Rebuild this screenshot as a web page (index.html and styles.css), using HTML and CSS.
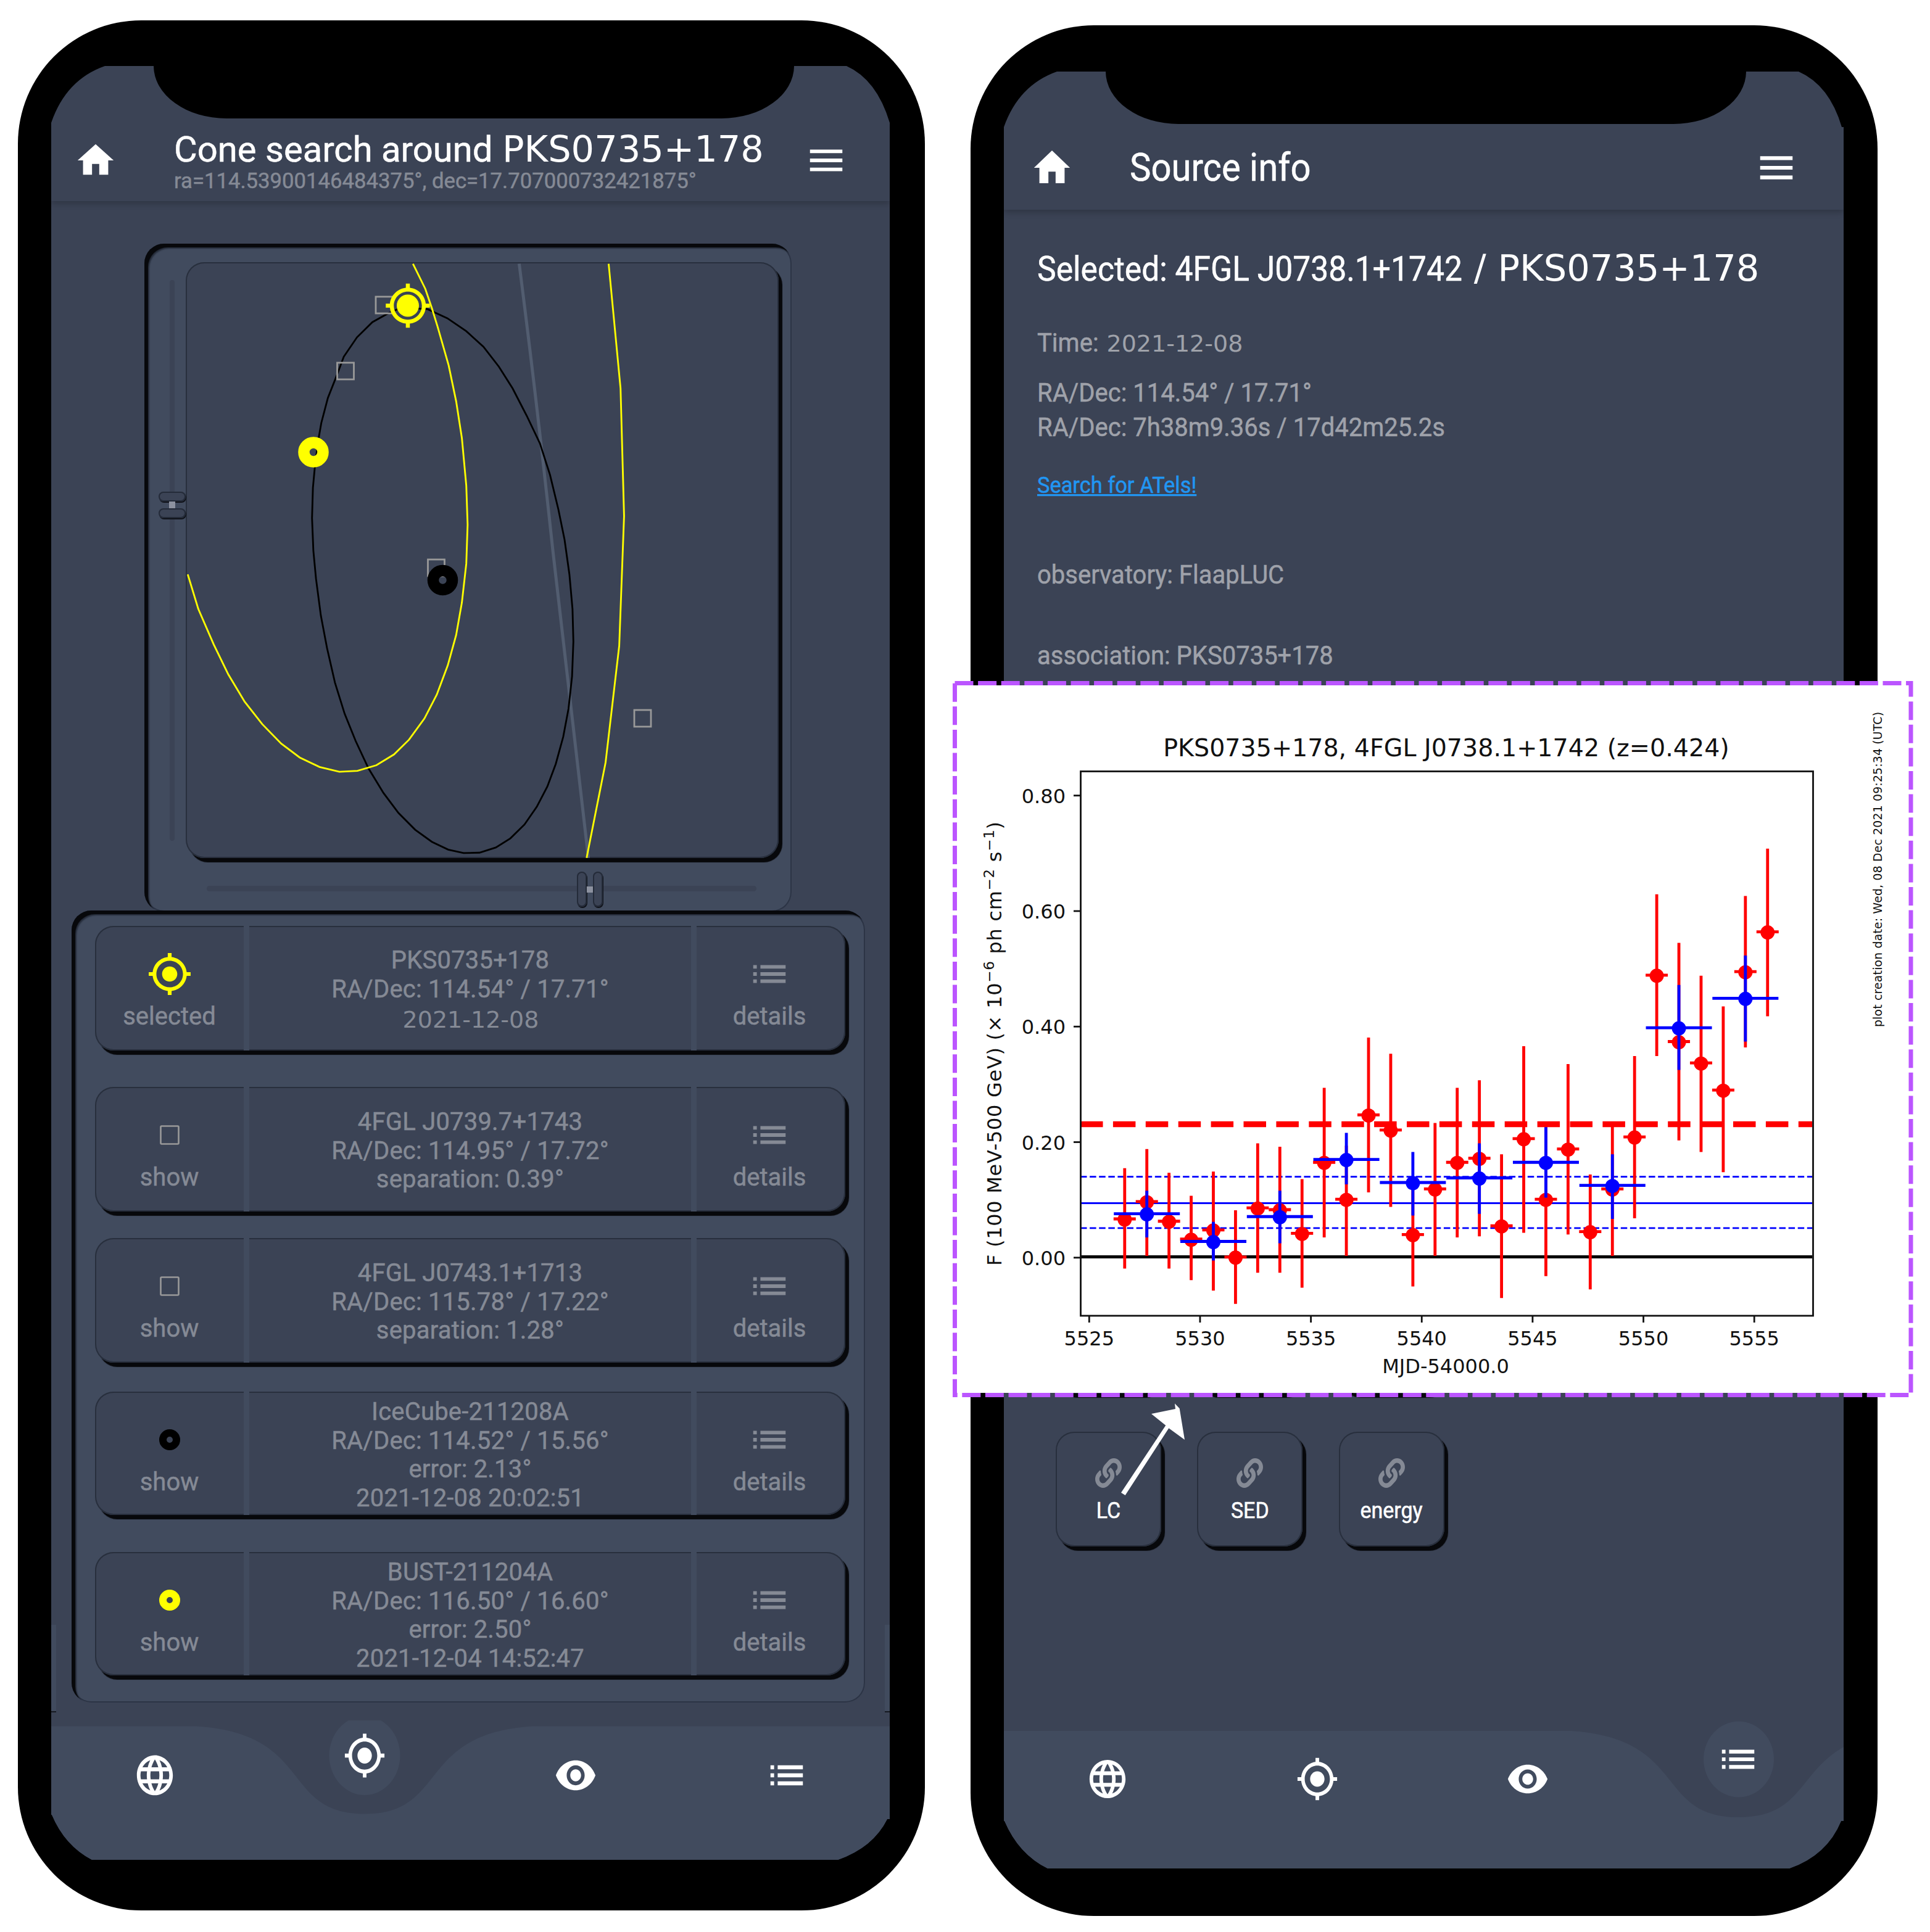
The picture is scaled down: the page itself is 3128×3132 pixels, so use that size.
FILE: index.html
```html
<!DOCTYPE html>
<html lang="en">
<head>
<meta charset="UTF-8">
<title>Cone search</title>
<link rel="stylesheet" href="styles.css">
</head>
<body>

<!-- icon set -->
<svg class="defs" width="0" height="0">
	<symbol id="i-home" viewBox="0 0 24 24"><path d="M10 20v-6h4v6h5v-8h3L12 3 2 12h3v8z"/></symbol>
	<symbol id="i-menu" viewBox="0 0 24 24"><path d="M3 18h18v-2H3v2zm0-5h18v-2H3v2zm0-7v2h18V6H3z"/></symbol>
	<symbol id="i-list" viewBox="0 0 24 24"><path d="M3 13h2v-2H3v2zm0 4h2v-2H3v2zm0-8h2V7H3v2zm4 4h14v-2H7v2zm0 4h14v-2H7v2zM7 7v2h14V7H7z"/></symbol>
	<symbol id="i-target" viewBox="0 0 24 24"><path d="M12 8c-2.21 0-4 1.79-4 4s1.79 4 4 4 4-1.79 4-4-1.79-4-4-4zm8.94 3c-.46-4.17-3.77-7.48-7.94-7.94V1h-2v2.06C6.83 3.52 3.52 6.83 3.06 11H1v2h2.06c.46 4.17 3.77 7.48 7.94 7.94V23h2v-2.06c4.17-.46 7.48-3.77 7.94-7.94H23v-2h-2.06zM12 19c-3.87 0-7-3.13-7-7s3.13-7 7-7 7 3.13 7 7-3.13 7-7 7z"/></symbol>
	<symbol id="i-globe" viewBox="0 0 24 24"><path d="M11.99 2C6.47 2 2 6.48 2 12s4.47 10 9.99 10C17.52 22 22 17.52 22 12S17.52 2 11.99 2zm6.93 6h-2.95c-.32-1.25-.78-2.45-1.38-3.56 1.84.63 3.37 1.91 4.33 3.56zM12 4.04c.83 1.2 1.48 2.53 1.91 3.96h-3.82c.43-1.43 1.08-2.76 1.91-3.96zM4.26 14C4.1 13.36 4 12.69 4 12s.1-1.36.26-2h3.38c-.08.66-.14 1.32-.14 2 0 .68.06 1.34.14 2H4.26zm.82 2h2.95c.32 1.25.78 2.45 1.38 3.56-1.84-.63-3.37-1.9-4.33-3.56zm2.95-8H5.08c.96-1.66 2.49-2.93 4.33-3.56C8.81 5.55 8.35 6.75 8.03 8zM12 19.96c-.83-1.2-1.48-2.53-1.91-3.96h3.82c-.43 1.43-1.08 2.76-1.91 3.96zM14.34 14H9.66c-.09-.66-.16-1.32-.16-2 0-.68.07-1.35.16-2h4.68c.09.65.16 1.32.16 2 0 .68-.07 1.34-.16 2zm.25 5.56c.6-1.11 1.06-2.31 1.38-3.56h2.95c-.96 1.65-2.49 2.93-4.33 3.56zM16.36 14c.08-.66.14-1.32.14-2 0-.68-.06-1.34-.14-2h3.38c.16.64.26 1.31.26 2s-.1 1.36-.26 2h-3.38z"/></symbol>
	<symbol id="i-eye" viewBox="0 0 24 24"><path d="M12 4.5C7 4.5 2.73 7.61 1 12c1.73 4.39 6 7.5 11 7.5s9.27-3.11 11-7.5c-1.73-4.39-6-7.5-11-7.5zM12 17c-2.76 0-5-2.24-5-5s2.24-5 5-5 5 2.24 5 5-2.24 5-5 5zm0-8c-1.66 0-3 1.34-3 3s1.34 3 3 3 3-1.34 3-3-1.34-3-3-3z"/></symbol>
	<symbol id="i-link" viewBox="0 0 512 512" preserveAspectRatio="none"><path d="M326.612 185.391c59.747 59.809 58.927 155.698.36 214.59-.11.12-.24.25-.36.37l-67.2 67.2c-59.27 59.27-155.699 59.262-214.96 0-59.27-59.26-59.27-155.7 0-214.96l37.106-37.106c9.84-9.84 26.786-3.3 27.294 10.606.648 17.722 3.826 35.527 9.69 52.721 1.986 5.822.567 12.262-3.783 16.612l-13.087 13.087c-28.026 28.026-28.905 73.66-1.155 101.96 28.024 28.579 74.086 28.749 102.325.51l67.2-67.19c28.191-28.191 28.073-73.757 0-101.83-3.701-3.694-7.429-6.564-10.341-8.569a16.037 16.037 0 0 1-6.947-12.606c-.396-10.567 3.348-21.456 11.698-29.806l21.054-21.055c5.521-5.521 14.182-6.199 20.584-1.731a152.482 152.482 0 0 1 20.522 17.197zM467.547 44.449c-59.261-59.262-155.69-59.27-214.96 0l-67.2 67.2c-.12.12-.25.25-.36.37-58.566 58.892-59.387 154.781.36 214.59a152.454 152.454 0 0 0 20.521 17.196c6.402 4.468 15.064 3.789 20.584-1.731l21.054-21.055c8.35-8.35 12.094-19.239 11.698-29.806a16.037 16.037 0 0 0-6.947-12.606c-2.912-2.005-6.64-4.875-10.341-8.569-28.073-28.073-28.191-73.639 0-101.83l67.2-67.19c28.239-28.239 74.3-28.069 102.325.51 27.75 28.3 26.872 73.934-1.155 101.96l-13.087 13.087c-4.35 4.35-5.769 10.79-3.783 16.612 5.864 17.194 9.042 34.999 9.69 52.721.509 13.906 17.454 20.446 27.294 10.606l37.106-37.106c59.271-59.259 59.271-155.699.001-214.959z"/></symbol>
	<symbol id="i-square" viewBox="0 0 70 70"><rect x="20.5" y="20.5" width="29" height="29" rx="1.5" fill="none" stroke="#999" stroke-width="2.6"/></symbol>
	<symbol id="i-ring" viewBox="0 0 70 70"><circle cx="35" cy="35" r="11" fill="none" stroke="currentColor" stroke-width="12"/></symbol>
</svg>

<div class="phones">

	<div class="phone phone-1">
		<div class="screen">
			<div class="notch"></div>
			<header class="bar">
				<svg class="icon"><use href="#i-home"/></svg>
				<div class="titles">
					<h1>Cone search around <span class="name">PKS0735+178</span></h1>
					<p class="sub">ra=114.53900146484375°, dec=17.707000732421875°</p>
				</div>
				<svg class="icon menu"><use href="#i-menu"/></svg>
			</header>

			<section class="sunken map-panel">
				<div class="slider slider-v">
					<div class="track"></div>
					<div class="knob"><i></i><b></b><i></i></div>
				</div>
				<div class="raised map">
					<svg viewBox="0 0 961 966">
						<g transform="translate(-101 -55) scale(.7143 .7015)" fill="none" stroke-width="4">
							<path stroke="#525d70" stroke-width="7" d="M898 82Q938 400 975 750Q1015 1100 1055 1455"/>
							<path stroke="#000" d="M645 184L690 187 735 208 778 238 817 274 852 320 883 370 915 433 945 497 968 570 987 650 1001 720 1012 800 1019 880 1021 955 1018 1035 1010 1110 998 1175 981 1238 962 1290 938 1337 910 1378 878 1410 845 1431 808 1443 772 1444 737 1436 700 1418 662 1390 624 1351 590 1305 556 1248 527 1185 502 1122 480 1050 462 970 448 895 437 810 431 745 428 670 430 600 435 545 443 485 449 450 464 392 485 338 500 297 530 252 565 217 600 197 620 188Z"/>
							<path stroke="#ff0" d="M657 82L685 140 700 185 713 228 738 317 755 400 768 485 778 595 781 685 778 775 768 865 755 940 736 1010 711 1078 683 1133 648 1182 614 1216 574 1241 531 1254 490 1256 445 1245 400 1223 358 1191 315 1146 275 1094 238 1031 205 962 170 880 146 800"/>
							<path stroke="#ff0" d="M1101 82L1128 370 1136 665 1125 965 1094 1235 1051 1455"/>
						</g>
						<g fill="none" stroke="#999" stroke-width="2.8">
							<rect x="308" y="56" width="27" height="27"/>
							<rect x="245.500" y="163" width="27" height="27"/>
							<rect x="392.500" y="482" width="27" height="27"/>
							<rect x="727" y="726" width="27" height="27"/>
						</g>
						<circle cx="207" cy="308" r="15.500" fill="none" stroke="#ff0" stroke-width="18.500"/>
						<circle cx="416.500" cy="515.500" r="15.500" fill="none" stroke="#000" stroke-width="18.500"/>
						<svg x="321" y="31.500" width="78" height="78" fill="#ff0"><use href="#i-target"/></svg>
						<circle cx="360" cy="70.500" r="18" fill="#ff0"/>
					</svg>
				</div>
				<div class="slider slider-h">
					<div class="track"></div>
					<div class="knob"><i></i><b></b><i></i></div>
				</div>
			</section>

			<section class="sunken list">
				<article class="raised item">
					<div class="side selected"><svg class="icon"><use href="#i-target"/></svg>selected</div>
					<div class="text">PKS0735+178<br>RA/Dec: 114.54° / 17.71°<br><span class="stamp">2021-12-08</span></div>
					<div class="side"><svg class="icon"><use href="#i-list"/></svg>details</div>
				</article>
				<article class="raised item item-2">
					<div class="side"><svg class="icon"><use href="#i-square"/></svg>show</div>
					<div class="text">4FGL J0739.7+1743<br>RA/Dec: 114.95° / 17.72°<br>separation: 0.39°</div>
					<div class="side"><svg class="icon"><use href="#i-list"/></svg>details</div>
				</article>
				<article class="raised item item-3">
					<div class="side"><svg class="icon"><use href="#i-square"/></svg>show</div>
					<div class="text">4FGL J0743.1+1713<br>RA/Dec: 115.78° / 17.22°<br>separation: 1.28°</div>
					<div class="side"><svg class="icon"><use href="#i-list"/></svg>details</div>
				</article>
				<article class="raised item item-4">
					<div class="side black"><svg class="icon"><use href="#i-ring"/></svg>show</div>
					<div class="text">IceCube-211208A<br>RA/Dec: 114.52° / 15.56°<br>error: 2.13°<br>2021-12-08 20:02:51</div>
					<div class="side"><svg class="icon"><use href="#i-list"/></svg>details</div>
				</article>
				<article class="raised item item-5">
					<div class="side yellow"><svg class="icon"><use href="#i-ring"/></svg>show</div>
					<div class="text">BUST-211204A<br>RA/Dec: 116.50° / 16.60°<br>error: 2.50°<br>2021-12-04 14:52:47</div>
					<div class="side"><svg class="icon"><use href="#i-list"/></svg>details</div>
				</article>
			</section>

			<nav class="tabs">
				<svg class="wave" viewBox="0 -9.5 1359 226.5">
					<path d="M0 0H236C426 12 372 142 508 142C644 142 590 12 780 0H1359V217H0Z"/>
					<ellipse cx="508" cy="47.500" rx="57.500" ry="64"/>
				</svg>
				<a><svg class="icon"><use href="#i-globe"/></svg></a>
				<a class="active"><svg class="icon"><use href="#i-target"/></svg></a>
				<a><svg class="icon"><use href="#i-eye"/></svg></a>
				<a><svg class="icon"><use href="#i-list"/></svg></a>
			</nav>
		</div>
	</div>

	<div class="phone phone-2">
		<div class="screen">
			<div class="notch"></div>
			<header class="bar">
				<svg class="icon tall"><use href="#i-home"/></svg>
				<h1 class="tall">Source info</h1>
				<svg class="icon tall menu"><use href="#i-menu"/></svg>
			</header>
			<main class="info">
				<h2><span class="tall">Selected: 4FGL J0738.1+1742</span><span class="name"> / PKS0735+178</span></h2>
				<p class="time"><span class="tall">Time:</span> <span class="stamp">2021-12-08</span></p>
				<p class="deg"><span class="tall">RA/Dec: 114.54° / 17.71°</span></p>
				<p class="hms"><span class="tall">RA/Dec: 7h38m9.36s / 17d42m25.2s</span></p>
				<p class="atel"><a class="tall">Search for ATels!</a></p>
				<p class="obs"><span class="tall">observatory: FlaapLUC</span></p>
				<p class="assoc"><span class="tall">association: PKS0735+178</span></p>
				<div class="links covered">
					<div class="raised link"></div>
					<div class="raised link"></div>
					<div class="raised link"></div>
				</div>
				<div class="links">
					<div class="raised link"><svg><use href="#i-link"/></svg><span class="tall">LC</span></div>
					<div class="raised link"><svg><use href="#i-link"/></svg><span class="tall">SED</span></div>
					<div class="raised link"><svg><use href="#i-link"/></svg><span class="tall">energy</span></div>
				</div>
			</main>
			<nav class="tabs">
				<svg class="wave" viewBox="0 -16 1361 239">
					<path d="M0 0H919C1109 12 1055 140 1191 140C1327 140 1273 12 1463 0V223H0Z"/>
					<ellipse cx="1191" cy="46" rx="57" ry="61.500"/>
				</svg>
				<a><svg class="icon"><use href="#i-globe"/></svg></a>
				<a><svg class="icon"><use href="#i-target"/></svg></a>
				<a><svg class="icon"><use href="#i-eye"/></svg></a>
				<a class="active"><svg class="icon"><use href="#i-list"/></svg></a>
			</nav>
		</div>
	</div>
</div>

<!-- light curve opened from the LC button -->
<svg class="plot" viewBox="1544 1104 1557 1162">
	<rect x="1551" y="1111" width="1543" height="1147" fill="#fff"/>
	<rect x="1547.500" y="1107.500" width="1549.500" height="1154" fill="none" stroke="#bb55ff" stroke-width="7" stroke-dasharray="30 7.6"/>
	<text class="plot-title" x="2344" y="1226">PKS0735+178, 4FGL J0738.1+1742 (z=0.424)</text>
	<g stroke="#00f" stroke-width="2.800">
		<path d="M1751 1950.500H2937"/>
		<path d="M1751 1907.700H2937M1751 1990.800H2937" stroke-dasharray="10.500 4.600"/>
	</g>
	<path d="M1751 1822.500H2937" stroke="#f00" stroke-width="9.500" stroke-dasharray="36.500 16.400"/>
	<path d="M1751 2037.500H2937" stroke="#000" stroke-width="5"/>
	<g id="points"></g>
	<rect x="1751.500" y="1250.500" width="1187" height="882.500" fill="none" stroke="#111" stroke-width="2.800"/>
	<g id="ticks" stroke="#111" stroke-width="2.800"></g>
	<g id="labels"></g>
	<text class="mid" x="2343" y="2226">MJD-54000.0</text>
	<text transform="translate(1623 2052) rotate(-90)" textLength="720">F (100 MeV-500 GeV) (× 10<tspan class="sup" dy="-12">−6</tspan><tspan dy="12"> ph cm</tspan><tspan class="sup" dy="-12">−2</tspan><tspan dy="12"> s</tspan><tspan class="sup" dy="-12">−1</tspan><tspan dy="12">)</tspan></text>
	<text class="created" transform="translate(3050 1665) rotate(-90)" textLength="511">plot creation date: Wed, 08 Dec 2021 09:25:34 (UTC)</text>
</svg>

<svg class="arrow" viewBox="1810 2270 120 160"><path d="M1904 2275.300L1911.700 2283.300 1920 2334 1894.300 2315.300 1823.700 2424 1817 2419.700 1889.300 2310.700 1866 2292 1905 2284Z"/></svg>

<script src="plot.js"></script>
</body>
</html>
```
FILE: styles.css
```css
*{box-sizing:border-box;margin:0;padding:0;}
body{position:relative;width:3128px;height:3132px;overflow:hidden;background:#fff;font:400 40px/46.9px Roboto,sans-serif;}
h1,h2{font-weight:400;color:#fff;white-space:nowrap;}
.defs{position:absolute;}
.icon{display:block;width:70px;height:70px;fill:currentColor;}

.phones{display:flex;align-items:flex-start;gap:74px;padding-left:29px;}
.phone{flex:none;width:1470px;background:#000;border-radius:200px;-webkit-text-stroke:.5px;}
.phone-1{height:3064px;margin-top:33px;padding:74px 0 0 54px;}
.phone-2{height:3065px;margin-top:41px;padding:75px 0 0 54px;}
.screen{position:relative;display:flex;flex-direction:column;background:#3b4355;}
.phone-1 .screen{width:1359px;height:2908px;clip-path:path("M0 92Q24 22 87 0H1289Q1338 22 1359 92V2842H1355Q1332 2888 1275 2908H66Q22 2885 1 2835L0 2835Z");}
.phone-2 .screen{width:1361px;height:2913px;clip-path:path("M0 90Q24 22 86 0H1288Q1338 22 1358 90H1361V2836H1357Q1334 2892 1273 2913H71Q24 2890 1 2836L0 2836Z");}
.notch{position:absolute;z-index:2;top:0;left:166px;width:1038px;height:85px;background:#000;border-radius:0 0 118px 118px/0 0 85px 85px;}
.phone-2 .notch{left:165px;}

/* faint strips beside the list */
.phone-1 .screen:before,.phone-1 .screen:after{content:"";position:absolute;top:2527px;width:8px;height:140px;background:#414b5e;border-bottom:2px solid #151820;}
.phone-1 .screen:before{left:0;}
.phone-1 .screen:after{right:0;}

/* app bar */
.bar{flex:none;display:flex;align-items:center;height:219px;padding:86px 68px 0 37px;color:#fff;box-shadow:0 4px 10px rgba(0,0,0,.22);}
.bar h1{font-size:58px;line-height:60px;}
.titles{margin-left:92px;padding-top:8px;}
.name{font:59px/60px "DejaVu Sans",sans-serif;-webkit-text-stroke:0;}
.bar .name{margin-left:1px;}
.sub{font-size:34.700px;line-height:43.500px;color:#858a95;white-space:nowrap;}
.menu{margin-left:auto;}
.phone-2 .bar{height:224px;padding:87px 74px 0 43px;}
.phone-2 .bar h1{margin-left:91px;}

/* panels and buttons */
.sunken{background:#414b5e;border-radius:32px;box-shadow:inset 6px 6px 1px #07080b,inset 8px 8px 2px #262d3b,inset 0 0 0 2px #2c3445;}
.raised{background:#3b4355;border-radius:30px;box-shadow:inset 0 0 0 2px #282f3d,6px 7px 1px #07080b;}

.map-panel{flex:none;display:grid;grid-template-columns:67px 961px;grid-template-rows:966px 87px;width:1049px;height:1083px;margin:69px 0 0 151px;padding-top:30px;}
.map svg{display:block;width:961px;height:966px;}
.map svg svg{width:78px;height:78px;}
.slider{position:relative;}
.track{background:#3b4355;border-radius:5px;}
.slider-v .track{width:8px;height:909px;margin:29px 0 0 41px;}
.slider-h{grid-column:2;}
.slider-h .track{width:891px;height:9px;margin:45px 0 0 34px;}
.knob{position:absolute;display:flex;align-items:center;}
.knob i{background:#3b4355;border-radius:8px;box-shadow:inset 0 0 0 2px #242b39,1px 2px 0 #10131a;}
.knob b{background:#8d92a0;}
.slider-v .knob{top:372px;left:23px;flex-direction:column;}
.slider-v .knob i{width:44px;height:16px;}
.slider-v .knob b{width:10px;height:11px;}
.slider-h .knob{top:22px;left:634px;}
.slider-h .knob i{width:16px;height:57px;}
.slider-h .knob b{width:10px;height:10px;}

.list{position:relative;flex:none;width:1286px;height:1284px;margin:-2px 0 0 33px;padding:25px 0 0 38px;}
.item{display:flex;width:1216px;height:202px;color:#858a95;text-align:center;}
.item-2{margin-top:59px;}
.item-3{margin-top:43px;}
.item-4{margin-top:47px;height:200px;}
.item-5{margin-top:60px;height:200px;}
.side{width:241px;padding:43px 5px 0 0;}
.side .icon{margin:0 auto 11px;}
.side:first-child{width:250px;border-right:9px solid #414b5e;padding-right:0;}
.text{display:flow-root;width:725px;border-right:9px solid #414b5e;padding-top:33px;line-height:46.500px;letter-spacing:.2px;}
.item-2 .text,.item-3 .text{padding-top:34px;}
.item-4 .text,.item-5 .text{padding-top:10px;}
.item .stamp{position:relative;top:3px;left:1px;letter-spacing:0;}
.stamp{font:38px/46px "DejaVu Sans",sans-serif;-webkit-text-stroke:0;}
.selected .icon{width:74px;height:74px;margin:-2px auto 9px;}
.selected .icon,.yellow .icon{color:#ff0;}
.black .icon{color:#000;}

/* bottom tabs */
.tabs{position:relative;display:grid;grid-template-columns:336px 344px 340px 344px;height:217px;margin-top:auto;color:#fff;}
.wave{position:absolute;top:-9.500px;left:0;width:1359px;height:226.500px;fill:#414b5e;}
.tabs a{position:relative;display:flex;align-items:center;justify-content:center;height:159px;}
.tabs .icon{transform:scaleY(1.11);}
.tabs .active{top:-31.500px;}
.phone-2 .tabs{height:223px;grid-template-columns:336px 344px 338px 344px;}
.phone-2 .wave{top:-16px;width:1361px;height:239px;}
.phone-2 .tabs a{height:155px;}
.phone-2 .tabs .icon{transform:scaleY(1.065);}

/* source info */
.tall{display:inline-block;transform:scaleY(1.07);transform-origin:0 77%;}
.bar .tall{transform-origin:0 50%;}
.info{padding:60px 0 0 54px;}
.info h2{height:70px;font-size:51.600px;line-height:70px;white-space:pre;}
.info .name{line-height:70px;}
.info p{height:50px;line-height:50px;color:#9fa2aa;white-space:nowrap;}
.info .time{margin-top:62px;}
.time .stamp{margin-left:3px;}
.info .deg{margin-top:31px;}
.info .hms{margin-top:6px;}
.info .atel{margin-top:43px;font-size:34.400px;}
.atel a{color:#2196f3;text-decoration:underline;}
.info .obs{margin-top:96px;}
.info .assoc{margin-top:81px;}
.links{display:flex;gap:58.300px;margin:62px 0 0 30px;}
.links.covered{margin-top:984px;}
.link{display:flex;flex-direction:column;align-items:center;width:171px;height:186px;padding-top:43px;color:#fff;font-size:34px;line-height:40px;}
.link svg{width:43px;height:48px;margin-bottom:17px;fill:#858a95;}

/* overlays */
.plot{position:absolute;left:1544px;top:1104px;width:1557px;height:1162px;}
.plot text{font:32px "DejaVu Sans",sans-serif;fill:#111;}
.plot .mid{text-anchor:middle;}
.plot .end{text-anchor:end;}
.plot .plot-title{font-size:39.600px;text-anchor:middle;}
.plot .created{font-size:18.800px;}
.plot .sup{font-size:23px;}
.arrow{position:absolute;left:1810px;top:2270px;width:120px;height:160px;fill:#fff;}
```
FILE: plot.js
```js
// [flux, upper end, lower end], one per day from 5526.6
var daily = [
	[.066,.155,-.019],[.096,.188,.003],[.062,.147,-.019],[.031,.107,-.039],[.047,.149,-.057],
	[0,.082,-.080],[.085,.198,-.026],[.082,.192,-.026],[.041,.136,-.052],[.164,.294,.035],
	[.100,.194,.003],[.246,.381,.113],[.220,.353,.088],[.039,.127,-.050],[.118,.233,.003],
	[.164,.294,.035],[.171,.307,.037],[.054,.179,-.070],[.205,.366,.043],[.100,.231,-.032],
	[.187,.335,.040],[.044,.144,-.055],[.118,.227,.003],[.208,.349,.068],[.488,.629,.349],
	[.373,.545,.203],[.336,.488,.183],[.289,.435,.148],[.494,.626,.364],[.563,.708,.418]
];
// three day bins from 5527.6
var binned = [
	[.075,.116,.035],[.027,.062,-.005],[.070,.116,.025],[.169,.216,.127],[.129,.183,.073],
	[.137,.198,.076],[.164,.226,.104],[.124,.179,.067],[.397,.472,.325],[.448,.523,.374]
];

function px(d){ return 1765.3 + 35.93 * (d - 5525); }
function py(v){ return 2038.8 - 936.4 * v; }

function series(data, start, step, half, color){
	var out = '<g stroke="' + color + '" fill="' + color + '" stroke-width="4.8">';
	data.forEach(function (p, i){
		var x = px(start + i * step), y = py(p[0]);
		out += '<path d="M' + x + ' ' + py(p[1]) + 'V' + py(p[2]) + 'M' + (x - half) + ' ' + (y - 1) + 'H' + (x + half) + '"/>';
		out += '<circle cx="' + x + '" cy="' + y + '" r="11.5" stroke="none"/>';
	});
	return out + '</g>';
}

document.getElementById('points').innerHTML =
	series(daily, 5526.6, 1, 18, '#f00') + series(binned, 5527.6, 3, 53.5, '#00f');

var ticks = '', labels = '', i;
for (i = 5525; i <= 5555; i += 5){
	ticks += '<path d="M' + px(i) + ' 2133v11"/>';
	labels += '<text class="mid" x="' + px(i) + '" y="2181">' + i + '</text>';
}
for (i = 0; i <= 4; i++){
	ticks += '<path d="M1740 ' + py(i / 5) + 'h11"/>';
	labels += '<text class="end" x="1727" y="' + (py(i / 5) + 12) + '">' + (i / 5).toFixed(2) + '</text>';
}
document.getElementById('ticks').innerHTML = ticks;
document.getElementById('labels').innerHTML = labels;
```
